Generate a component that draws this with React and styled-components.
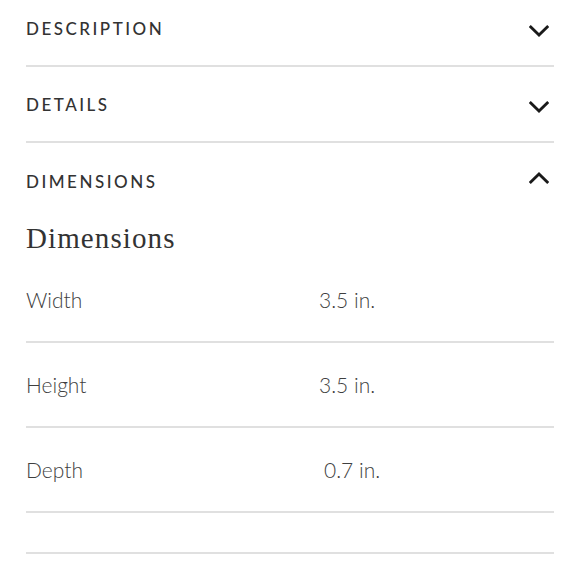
import styled, { createGlobalStyle } from "styled-components";

const GlobalStyle = createGlobalStyle`
  html, body {
    margin: 0;
    padding: 0;
    background: #ffffff;
  }
  body {
    font-family: Lato, "Noto Sans", sans-serif;
    -webkit-font-smoothing: antialiased;
  }
`;

const Page = styled.div`
  width: 528px;
  padding: 0 26px;
  margin-top: -9px;
`;

const Section = styled.section`
  border-bottom: ${({ $open }) => ($open ? "none" : "2px solid #e0e0e0")};
`;

const Header = styled.button`
  display: flex;
  align-items: center;
  justify-content: space-between;
  width: 100%;
  height: ${({ $open }) => ($open ? "76px" : "74px")};
  padding: 0 5px 0 0;
  margin: 0;
  border: none;
  background: none;
  cursor: pointer;
`;

const Label = styled.span`
  font-family: Lato, "Noto Sans", sans-serif;
  font-size: 17px;
  font-weight: 500;
  letter-spacing: 2.5px;
  color: #333333;
`;

const Chevron = styled.svg`
  width: 20px;
  height: 20px;
  transform: ${({ $up }) => ($up ? "rotate(180deg)" : "none")};
`;

const Panel = styled.div`
  padding-bottom: 39px;
  border-bottom: 2px solid #e0e0e0;
`;

const Title = styled.h2`
  margin: 0;
  height: 39px;
  line-height: 39px;
  font-family: "Liberation Serif", "Times New Roman", serif;
  font-size: 29px;
  font-weight: 400;
  letter-spacing: 1.1px;
  color: #333333;
`;

const Row = styled.div`
  display: grid;
  grid-template-columns: 293px 1fr;
  align-items: center;
  height: 83px;
  border-bottom: 2px solid #e0e0e0;
  font-size: 21px;
  font-weight: 300;
  color: #3f3f3f;
`;

const Value = styled.span`
  padding-left: ${({ $indent }) => $indent || 0}px;
`;

const ChevronIcon = ({ up }) => (
  <Chevron $up={up} viewBox="0 0 20 20" fill="none">
    <polyline
      points="1.8,9 10,17 18.2,9"
      stroke="#1a1a1a"
      strokeWidth="2.9"
      strokeLinecap="square"
      strokeLinejoin="miter"
    />
  </Chevron>
);

const dimensions = [
  { name: "Width", value: "3.5 in." },
  { name: "Height", value: "3.5 in." },
  { name: "Depth", value: "0.7 in.", indent: 5 },
];

export default function App() {
  return (
    <>
      <GlobalStyle />
      <Page>
        <Section>
          <Header>
            <Label>DESCRIPTION</Label>
            <ChevronIcon />
          </Header>
        </Section>
        <Section>
          <Header>
            <Label>DETAILS</Label>
            <ChevronIcon />
          </Header>
        </Section>
        <Section $open>
          <Header $open>
            <Label>DIMENSIONS</Label>
            <ChevronIcon up />
          </Header>
          <Panel>
            <Title>Dimensions</Title>
            {dimensions.map((d) => (
              <Row key={d.name}>
                <span>{d.name}</span>
                <Value $indent={d.indent}>{d.value}</Value>
              </Row>
            ))}
          </Panel>
        </Section>
      </Page>
    </>
  );
}
